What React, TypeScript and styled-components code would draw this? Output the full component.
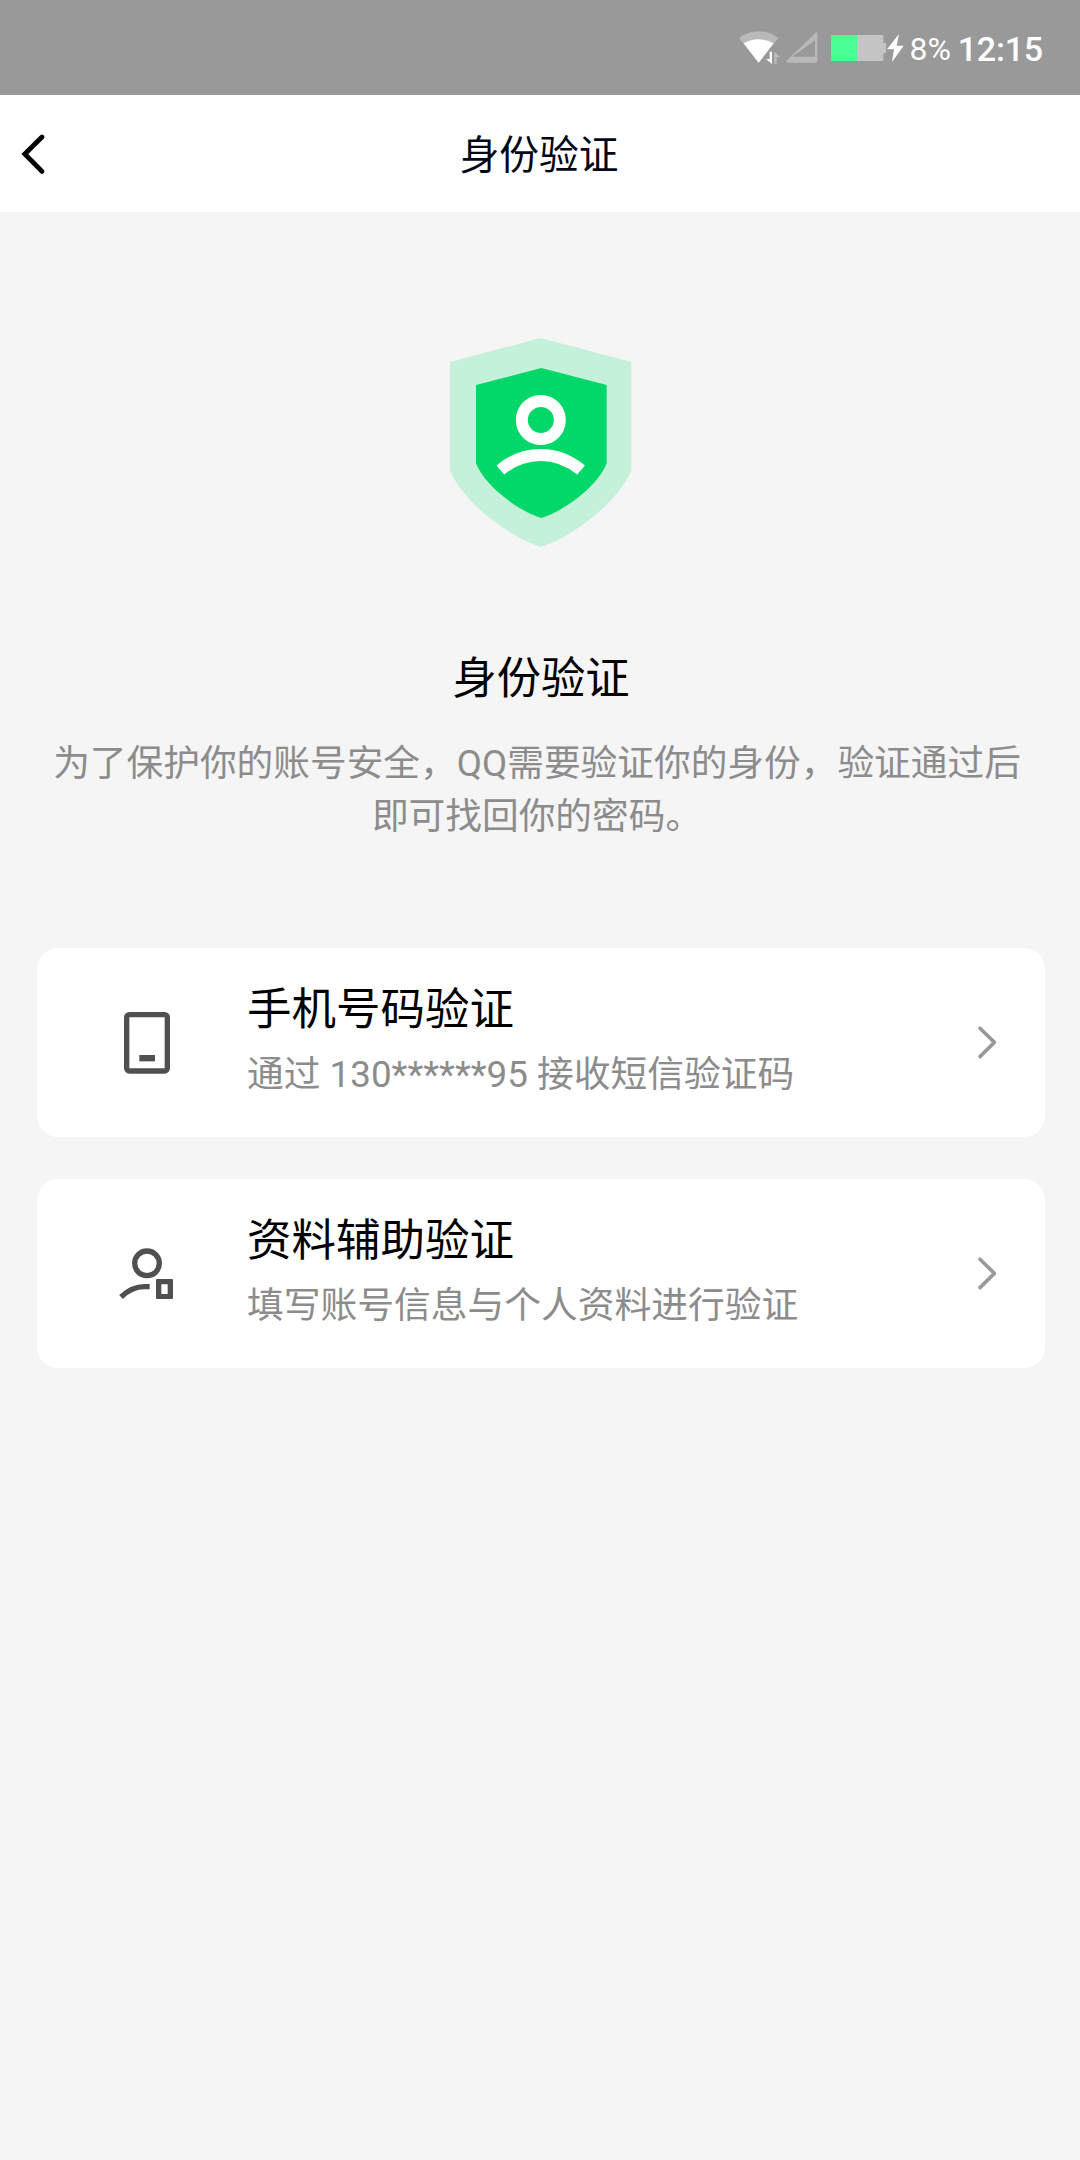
import React from "react";
import styled, { createGlobalStyle } from "styled-components";

const GlobalStyle = createGlobalStyle`
  * { box-sizing: border-box; }
  body {
    margin: 0;
    background: #f5f5f5;
    font-family: Roboto, "Noto Sans CJK SC", sans-serif;
  }
  svg { display: block; flex: none; }
  h1, h2, h3, p { margin: 0; font-weight: 400; }
`;

const Screen = styled.div`
  width: 1080px;
  min-height: 2160px;
  display: flex;
  flex-direction: column;
  background: #f5f5f5;
`;

const StatusBar = styled.header`
  height: 95px;
  padding-right: 36px;
  display: flex;
  align-items: center;
  justify-content: flex-end;
  background: #999;
  color: #fff;
`;

const StatusIcon = styled.svg<{ $gap?: number }>`
  margin-left: ${(p) => p.$gap ?? 0}px;
`;

const StatusText = styled.span<{ $size: number; $weight: number; $width: number }>`
  width: ${(p) => p.$width}px;
  font-size: ${(p) => p.$size}px;
  font-weight: ${(p) => p.$weight};
  line-height: 40px;
  padding-top: 2px;
  text-align: right;
  white-space: nowrap;
`;

const Clock = styled(StatusText)`
  letter-spacing: -0.2px;
  padding-right: 1px;
`;

const NavBar = styled.nav`
  height: 117px;
  display: grid;
  grid-template-columns: 120px 1fr 120px;
  align-items: center;
  background: #fff;
`;

const BackButton = styled.button`
  border: 0;
  padding: 0 0 0 18px;
  background: none;
`;

const NavTitle = styled.h1`
  font-size: 39.7px;
  line-height: 58px;
  padding: 4px 2px 0 0;
  text-align: center;
  color: #030818;
`;

const Main = styled.main`
  display: flex;
  flex-direction: column;
  align-items: center;
  padding: 125px 35px 0 37px;
`;

const Title = styled.h2`
  margin-top: 99px;
  font-size: 44.3px;
  line-height: 64px;
  color: #000;
`;

const Description = styled.p`
  margin-top: 26px;
  width: 988px;
  padding-right: 8px;
  font-size: 36.7px;
  line-height: 53px;
  text-align: center;
  color: #8c8c8c;
`;

const Methods = styled.div`
  width: 100%;
  margin-top: 105px;
  display: flex;
  flex-direction: column;
  gap: 42px;
`;

const MethodCard = styled.section`
  height: 189px;
  padding: 0 45px 0 80px;
  display: flex;
  align-items: center;
  border-radius: 21px;
  background: #fff;
`;

const MethodText = styled.div`
  flex: 1;
  margin-left: 70px;
  padding-bottom: 6px;
`;

const MethodTitle = styled.h3`
  font-size: 44.5px;
  line-height: 66px;
  color: #000;
`;

const MethodNote = styled.p`
  font-size: 36.75px;
  line-height: 54px;
  padding-top: 5px;
  color: #8c8c8c;
`;

const WifiIcon = () => (
  <StatusIcon width="42" height="35" viewBox="57 55 126 105">
    <path d="M57 79Q84 59 116 59Q148 59 175 79L116 153Z" fill="#b9b9b9" />
    <path d="M71 95Q92 83 116 83Q140 83 161 95L116 153Z" fill="#fff" />
    <path d="M149 120h7v37L138 142h11z" fill="#fff" />
    <path d="M163 120L181 136h-11v20h-7z" fill="#bdbdbd" />
  </StatusIcon>
);

const SignalIcon = () => (
  <StatusIcon $gap={5} width="32" height="31" viewBox="197 67 96 93">
    <path
      d="M286 69Q291 66 291 73V154Q291 159 286 159H202Q195 159 200 152ZM284 92L216 141H284Z"
      fill="#b9b9b9"
      fillRule="evenodd"
    />
  </StatusIcon>
);

const BatteryIcon = () => (
  <StatusIcon $gap={13} width="73" height="30" viewBox="333 66 219 90">
    <path d="M411 72H490V96H498V126H490V150H411Z" fill="#c4c4c4" />
    <path d="M333 72H411V150H333Z" fill="#48ff92" />
    <path d="M537 69L501 115H522L516 153L551 104H530Z" fill="#fff" />
  </StatusIcon>
);

const BackIcon = () => (
  <svg width="30" height="44" viewBox="54 124 90 132">
    <path d="M126 139L74.5 190L126 242" fill="none" stroke="#000" strokeWidth="14.5" strokeLinecap="round" />
  </svg>
);

const ShieldIcon = () => (
  <svg width="182" height="211" viewBox="60 51 546 633">
    <path
      d="M332 54L604 126V450C570 540 430 651 332 681C234 651 94 540 60 450V126Z"
      fill="#c5f0da"
    />
    <path
      d="M334 144L530 195V430C504 498 404 572 334 594C264 572 164 498 138 430V195Z"
      fill="#02d869"
    />
    <circle cx="332.5" cy="300" r="57" fill="none" stroke="#fff" strokeWidth="36" />
    <path d="M211 450Q265 405 332 405Q399 405 453 450" fill="none" stroke="#fff" strokeWidth="36" />
  </svg>
);

const PhoneIcon = () => (
  <svg width="60" height="67" viewBox="261 237 180 201">
    <rect x="290" y="254" width="122" height="169" rx="8" fill="none" stroke="#505050" strokeWidth="16" />
    <path d="M328 375h47v19h-47z" fill="#505050" />
  </svg>
);

const ProfileIcon = () => (
  <svg width="60" height="67" viewBox="261 240 180 201" fill="none" stroke="#505050" strokeWidth="16">
    <circle cx="351" cy="310" r="37" />
    <path d="M273 411Q306 380 343 380H359" />
    <path
      d="M381 357H426Q429 357 429 360V414Q429 417 426 417H381Q378 417 378 414V360Q378 357 381 357ZM394 373V402H413V373Z"
      fill="#505050"
      fillRule="evenodd"
      stroke="none"
    />
  </svg>
);

const ChevronIcon = () => (
  <svg width="24" height="38" viewBox="0 0 24 38" fill="none" stroke="#999" strokeWidth="3.6" strokeLinecap="round" strokeLinejoin="round">
    <path d="M4 4.2L18.4 18.4L4 32.6" />
  </svg>
);

const methods = [
  { Icon: PhoneIcon, title: "手机号码验证", note: "通过 130******95 接收短信验证码" },
  { Icon: ProfileIcon, title: "资料辅助验证", note: "填写账号信息与个人资料进行验证" },
];

export default function App() {
  return (
    <Screen>
      <GlobalStyle />
      <StatusBar>
        <WifiIcon />
        <SignalIcon />
        <BatteryIcon />
        <StatusText $size={32} $weight={400} $width={47}>8%</StatusText>
        <Clock $size={34} $weight={500} $width={93}>12:15</Clock>
      </StatusBar>
      <NavBar>
        <BackButton aria-label="返回">
          <BackIcon />
        </BackButton>
        <NavTitle>身份验证</NavTitle>
      </NavBar>
      <Main>
        <ShieldIcon />
        <Title>身份验证</Title>
        <Description>为了保护你的账号安全，QQ需要验证你的身份，验证通过后即可找回你的密码。</Description>
        <Methods>
          {methods.map(({ Icon, title, note }) => (
            <MethodCard key={title}>
              <Icon />
              <MethodText>
                <MethodTitle>{title}</MethodTitle>
                <MethodNote>{note}</MethodNote>
              </MethodText>
              <ChevronIcon />
            </MethodCard>
          ))}
        </Methods>
      </Main>
    </Screen>
  );
}
